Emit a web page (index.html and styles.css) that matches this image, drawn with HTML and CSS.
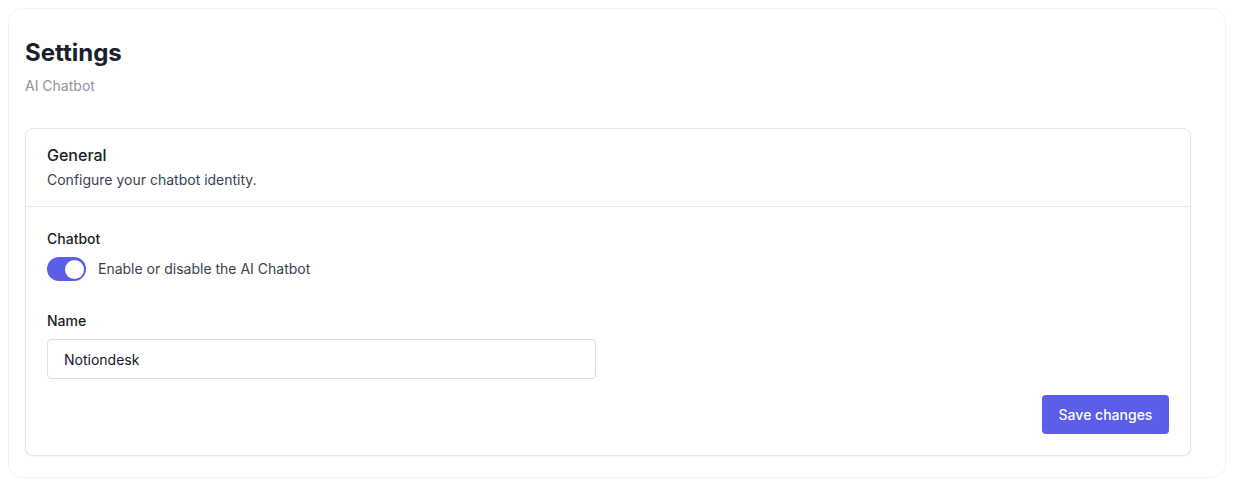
FILE: index.html
```html
<!DOCTYPE html>
<html>
<head>
<meta charset="utf-8">
<link rel="stylesheet" href="styles.css">
</head>
<body>
<div class="page">
  <div class="header">
    <h1 class="title">Settings</h1>
    <div class="subtitle">AI Chatbot</div>
  </div>
  <div class="card">
    <div class="card-head">
      <div class="card-title">General</div>
      <div class="card-desc">Configure your chatbot identity.</div>
    </div>
    <div class="card-body">
      <div class="field">
        <div class="label">Chatbot</div>
        <div class="toggle-row">
          <span class="toggle"><span class="knob"></span></span>
          <span class="toggle-text">Enable or disable the AI Chatbot</span>
        </div>
      </div>
      <div class="field field-name">
        <div class="label">Name</div>
        <div class="input">Notiondesk</div>
      </div>
      <div class="actions">
        <button class="btn">Save changes</button>
      </div>
    </div>
  </div>
</div>
</body>
</html>
```

FILE: styles.css
```css
* { box-sizing: border-box; }
html, body { margin: 0; background: #ffffff; }
body {
  padding: 8px 9px 8px 8px;
  font-family: Inter, "Liberation Sans", sans-serif;
  color: #111827;
}
.page {
  border: 1px solid #f1f2f4;
  border-radius: 14px;
  padding: 16px 34px 20px 16px;
  height: 470px;
}
.header { padding-top: 12px; }
.title {
  margin: 0;
  font-size: 24px;
  line-height: 32px;
  font-weight: 700;
  color: #1a202c;
}
.subtitle {
  margin-top: 7px;
  font-size: 14px;
  line-height: 20px;
  color: #8e94a0;
}
.card {
  margin-top: 32px;
  border: 1px solid #e3e5e9;
  border-radius: 8px;
  box-shadow: 0 1px 2px rgba(0,0,0,0.05);
  background: #fff;
}
.card-head {
  padding: 14px 21px 16px;
  border-bottom: 1px solid #e5e7eb;
}
.card-title {
  font-size: 16px;
  line-height: 24px;
  font-weight: 500;
  color: #1a1d24;
}
.card-desc {
  margin-top: 3px;
  font-size: 14px;
  line-height: 20px;
  color: #374151;
}
.card-body {
  padding: 22px 21px 21px;
}
.label {
  font-size: 14px;
  line-height: 20px;
  font-weight: 500;
  color: #1a1d24;
}
.toggle-row {
  margin-top: 8px;
  display: flex;
  align-items: center;
  gap: 12px;
}
.toggle {
  width: 39px;
  height: 24px;
  border-radius: 12px;
  background: #5a5ee8;
  display: flex;
  align-items: center;
  justify-content: flex-end;
  padding: 2px;
}
.knob {
  width: 19px;
  height: 19px;
  border-radius: 50%;
  background: #fff;
}
.toggle-text {
  font-size: 14px;
  line-height: 20px;
  color: #374151;
}
.field-name { margin-top: 30px; }
.input {
  margin-top: 8px;
  width: 549px;
  height: 40px;
  border: 1px solid #dcdfe4;
  border-radius: 4px;
  padding: 0 16px;
  display: flex;
  align-items: center;
  font-size: 14px;
  color: #111827;
}
.actions {
  margin-top: 16px;
  display: flex;
  justify-content: flex-end;
}
.btn {
  width: 127px;
  height: 39px;
  border: none;
  border-radius: 4px;
  background: #5a5ee8;
  color: #fff;
  font-family: Inter, "Liberation Sans", sans-serif;
  font-size: 14px;
  font-weight: 500;
}
```
